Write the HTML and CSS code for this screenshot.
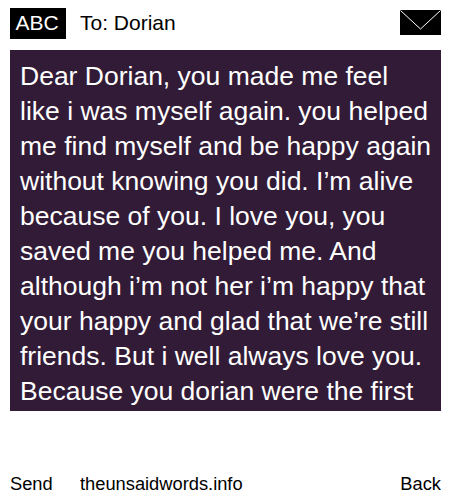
FILE: index.html
```html
<!DOCTYPE html>
<html lang="en">
<head>
    <meta charset="UTF-8">
    <title>The Unsaid Words</title>
    <link rel="stylesheet" href="styles.css">
</head>
<body>
    <div class="page">
        <div class="top">
            <div class="abc">ABC</div>
            <div class="to">To: Dorian</div>
            <svg class="mail" width="41" height="25" viewBox="0 0 41 25">
                <rect width="41" height="25" fill="#000"/>
                <path d="M0.5 0.5 L20.5 19 L40.5 0.5" fill="none" stroke="#fff" stroke-width="1"/>
            </svg>
        </div>
        <div class="message">Dear Dorian, you made me feel like i was myself again. you helped me find myself and be happy again without knowing you did. I’m alive because of you. I love you, you saved me you helped me. And although i’m not her i’m happy that your happy and glad that we’re still friends. But i well always love you. Because you dorian were the first</div>
        <div class="bottom">
            <span class="send">Send</span>
            <span class="site">theunsaidwords.info</span>
            <span class="back">Back</span>
        </div>
    </div>
</body>
</html>
```

FILE: styles.css
```css
body { margin: 0; font-family: "Liberation Sans", Arial, sans-serif; background: #fff; color: #000; }

.page { width: 450px; height: 500px; overflow: hidden; display: flex; flex-direction: column; padding: 8px 9px 0 10px; box-sizing: border-box; }

.top { display: flex; align-items: flex-start; height: 31px; }
.abc { width: 56px; height: 31px; box-sizing: border-box; padding-right: 2px; line-height: 30px; background: #000; color: #fff; font-size: 21px; text-align: center; }
.to { margin-left: 14px; font-size: 21px; line-height: 30px; flex: 1; }
.mail { margin-top: 2px; display: block; }

.message { margin-top: 11px; height: 361px; box-sizing: border-box; overflow: hidden; background: #321b36; color: #fff; font-size: 26.5px; line-height: 35px; padding: 9px 8px 0 10px; }

.bottom { display: flex; margin-top: 62px; font-size: 18.3px; line-height: 22px; }
.send { width: 70px; }
.site { flex: 1; }
```
